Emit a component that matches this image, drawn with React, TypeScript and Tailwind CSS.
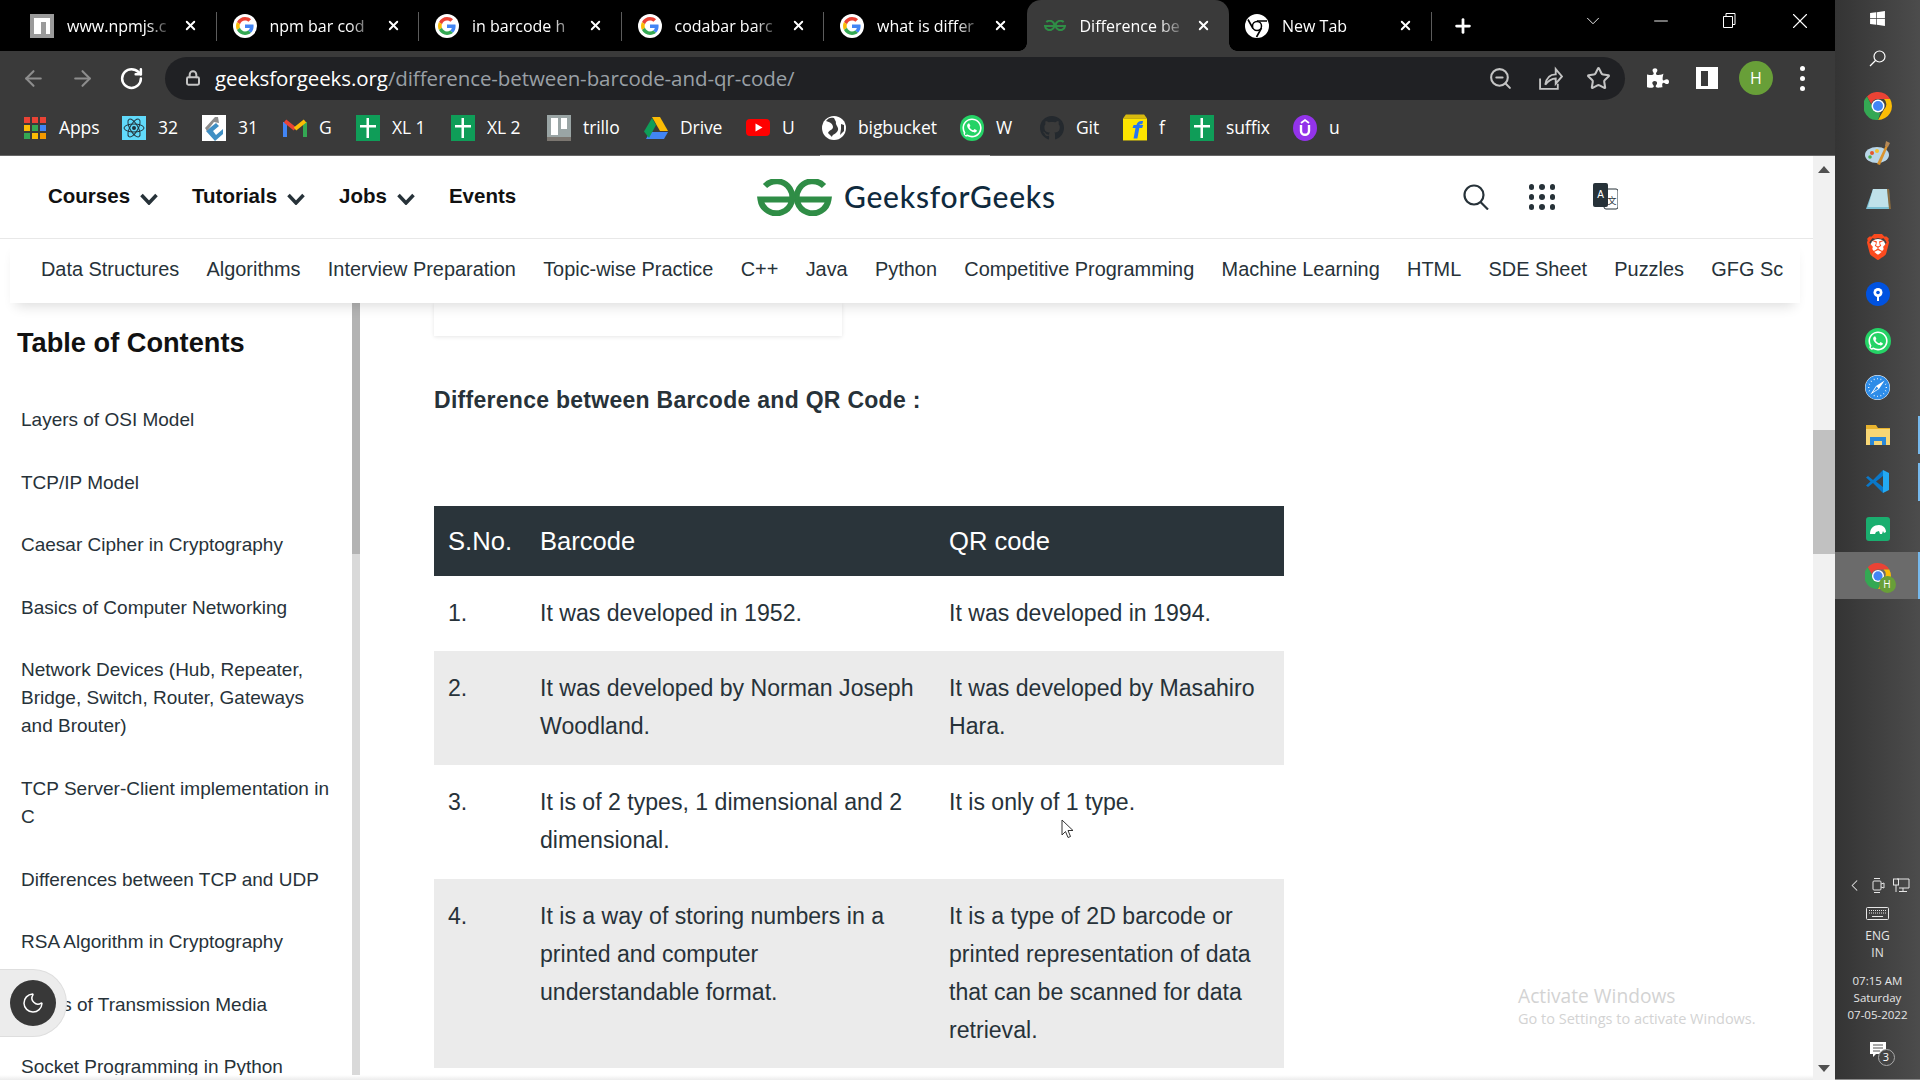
import { ArrowLeft, ArrowRight, RotateCw, Lock, ZoomOut, Star, X, Plus, Minus, ChevronDown, ChevronLeft, Moon } from "lucide-react";
import { FaWindows, FaWhatsapp, FaGithub, FaSafari, FaPuzzlePiece } from "react-icons/fa";
import { SiBrave } from "react-icons/si";

const uiFont = "font-['Open_Sans',sans-serif]";
const pageFont = "font-['Liberation_Sans',Arial,sans-serif]";

function GoogleG() {
  return (
    <div className="w-6 h-6 rounded-full bg-white flex items-center justify-center shrink-0">
      <svg width="18" height="18" viewBox="0 0 48 48">
        <path fill="#EA4335" d="M24 9.5c3.5 0 6.700 1.300 9.200 3.400l6.900-6.900C35.900 2.400 30.300 0 24 0 14.600 0 6.500 5.400 2.600 13.300l8 6.200C12.500 13.700 17.800 9.500 24 9.500z" />
        <path fill="#4285F4" d="M46.900 24.500c0-1.600-.1-3.100-.4-4.500H24v9h12.900c-.6 3-2.200 5.500-4.800 7.200l7.700 6c4.500-4.200 7.100-10.300 7.100-17.700z" />
        <path fill="#FBBC05" d="M10.500 28.700c-.5-1.500-.8-3-.8-4.700s.3-3.200.8-4.700l-8-6.200C.9 16.300 0 20 0 24s.9 7.700 2.600 10.900l7.900-6.200z" />
        <path fill="#34A853" d="M24 48c6.500 0 11.900-2.100 15.900-5.800l-7.700-6c-2.200 1.400-4.900 2.300-8.200 2.300-6.200 0-11.500-4.200-13.400-9.800l-8 6.200C6.500 42.600 14.600 48 24 48z" />
      </svg>
    </div>
  );
}

function GfgMark({ w, h, sw = 6 }: { w: number; h: number; sw?: number }) {
  return (
    <svg width={w} height={h} viewBox="0 0 75 37" fill="none" stroke="#2f8d46" strokeWidth={sw}>
      <path d="M67 7A16 16 0 1 0 71.500 20.500L37.500 20.500" />
      <path d="M8 7A16 16 0 1 1 3.500 20.500L37.500 20.500" />
    </svg>
  );
}

function NpmFav() {
  return (
    <svg width="24" height="24" viewBox="0 0 24 24" className="shrink-0">
      <rect width="24" height="24" fill="#9a9a9a" />
      <path fill="#fff" d="M4 4h16v16h-4V8h-5v12H4z" />
    </svg>
  );
}

function ChromeMono() {
  return (
    <svg width="24" height="24" viewBox="0 0 24 24" className="shrink-0">
      <circle cx="12" cy="12" r="12" fill="#fff" />
      <path d="M12 7h10M8 14.500 3 5.500M16.500 14 11.500 23" stroke="#000" strokeWidth="1.600" />
      <circle cx="12" cy="12" r="4.500" fill="#fff" stroke="#000" strokeWidth="1.500" />
    </svg>
  );
}

type Tab = { title: string; icon: React.ReactNode; active?: boolean };

const tabs: Tab[] = [
  { title: "www.npmjs.c", icon: <NpmFav /> },
  { title: "npm bar cod", icon: <GoogleG /> },
  { title: "in barcode h", icon: <GoogleG /> },
  { title: "codabar barc", icon: <GoogleG /> },
  { title: "what is differ", icon: <GoogleG /> },
  { title: "Difference be", icon: <div className="w-6 flex justify-center shrink-0"><GfgMark w={22} h={11} sw={7} /></div>, active: true },
  { title: "New Tab", icon: <ChromeMono /> },
];

function TabStrip() {
  return (
    <div className={`h-[51px] bg-black flex pl-[14px] shrink-0 text-white text-[16px] ${uiFont}`}>
      {tabs.map((t, i) => (
        <div
          key={i}
          className={`relative w-[202.5px] flex items-center pl-4 shrink-0 ${t.active ? "bg-[#3a3a3a] rounded-t-[14px]" : ""}`}
        >
          {t.active && (
            <>
              <div className="absolute -left-2 bottom-0 w-2 h-2 bg-[radial-gradient(circle_at_0_0,#000_7.5px,#3a3a3a_8px)]" />
              <div className="absolute -right-2 bottom-0 w-2 h-2 bg-[radial-gradient(circle_at_100%_0,#000_7.5px,#3a3a3a_8px)]" />
            </>
          )}
          {t.icon}
          <div className="ml-[13px] w-[110px] whitespace-nowrap [mask-image:linear-gradient(to_right,black_72%,transparent_97%)]">
            {t.title}
          </div>
          <X size={15} strokeWidth={3} className="ml-[6px] shrink-0" />
          {!t.active && i !== 4 && <div className="absolute right-0 top-[12px] h-[29px] w-px bg-[#5c5c5c]" />}
        </div>
      ))}
      <Plus size={22} strokeWidth={3} className="ml-5 mt-[15px] shrink-0" />
      <div className="ml-auto flex items-start text-white">
        <ChevronDown size={22} strokeWidth={1} className="mt-[10px] mr-[46px]" />
        <Minus size={22} strokeWidth={1} className="mt-[10px] mr-[48px]" />
        <svg width="18" height="18" viewBox="0 0 18 18" fill="none" stroke="#fff" className="mt-3 mr-[49px]">
          <path d="M3.500 4.500h9v11h-9zM6 4.500V1.500h9v11h-2.500" />
        </svg>
        <X size={26} strokeWidth={1} className="mt-[8px] mr-[22px]" />
      </div>
    </div>
  );
}

function Toolbar() {
  return (
    <div className="h-[54px] bg-[#3a3a3a] flex items-center shrink-0 relative">
      <ArrowLeft size={25} strokeWidth={2} className="ml-[21px] text-[#8d8d8d]" />
      <ArrowRight size={25} strokeWidth={2} className="ml-[24px] text-[#8d8d8d]" />
      <RotateCw size={25} strokeWidth={2.4} className="ml-[24px] text-white" />
      <div className="ml-[21px] w-[1460px] h-[43px] rounded-full bg-[#202124] flex items-center pl-5 pr-[14px]">
        <Lock size={16} strokeWidth={3} className="text-[#c4c4c4]" />
        <div className={`ml-[14px] text-[20.500px] whitespace-nowrap tracking-[-0.08px] ${uiFont}`}>
          <span className="text-white">geeksforgeeks.org</span>
          <span className="text-[#9aa0a6]">/difference-between-barcode-and-qr-code/</span>
        </div>
        <ZoomOut size={25} strokeWidth={2} className="ml-auto text-[#c4c4c4]" />
        <svg width="25" height="25" viewBox="0 0 24 24" fill="none" stroke="#c4c4c4" strokeWidth="1.800" className="ml-[25px]">
          <path d="M2 12v10h17v-5M7 18c1-7 5-10 10-10V3l6 7-6 7v-5c-4 0-7 2-10 6z" />
        </svg>
        <Star size={25} strokeWidth={2} className="ml-[23px] text-[#c4c4c4]" />
      </div>
      <FaPuzzlePiece size={22} className="ml-[22px] text-white" />
      <div className="ml-[27px] w-[22px] h-[22px] bg-white flex items-center pl-[5px] justify-start">
        <div className="w-[7px] h-[15px] bg-[#3a3a3a]" />
      </div>
      <div className={`ml-[21px] w-[34px] h-[34px] rounded-full bg-[#689f38] text-white text-[16px] flex items-center justify-center ${uiFont}`}>H</div>
      <div className="ml-[27px] flex flex-col gap-[5px]">
        <div className="w-[5px] h-[5px] rounded-full bg-white" />
        <div className="w-[5px] h-[5px] rounded-full bg-white" />
        <div className="w-[5px] h-[5px] rounded-full bg-white" />
      </div>
    </div>
  );
}

function AppsIcon() {
  const c = ["#ea4335", "#ea4335", "#ea4335", "#fbbc05", "#34a853", "#4285f4", "#34a853", "#fbbc05", "#f29900"];
  return (
    <div className="grid grid-cols-3 gap-[2px] w-[22px] h-[22px]">
      {c.map((x, i) => (
        <svg key={i} width="6" height="6" viewBox="0 0 6 6"><rect width="6" height="6" fill={x} /></svg>
      ))}
    </div>
  );
}

function SheetIcon() {
  return (
    <svg width="24" height="26" viewBox="0 0 24 26">
      <rect width="24" height="26" fill="#0f9d58" />
      <path d="M4 10h16v2.500H4zM10.500 3H13v20h-2.500z" fill="#fff" />
    </svg>
  );
}

const bookmarks: { label: string; w: string; icon: React.ReactNode }[] = [
  { label: "Apps", w: "w-[99px]", icon: <AppsIcon /> },
  {
    label: "32",
    w: "w-[80px]",
    icon: (
      <svg width="24" height="24" viewBox="0 0 24 24">
        <rect width="24" height="24" fill="#61dafb" />
        <g fill="none" stroke="#22323a" strokeWidth="1">
          <ellipse cx="12" cy="12" rx="10" ry="4" />
          <ellipse cx="12" cy="12" rx="10" ry="4" transform="rotate(60 12 12)" />
          <ellipse cx="12" cy="12" rx="10" ry="4" transform="rotate(120 12 12)" />
        </g>
        <circle cx="12" cy="12" r="2" fill="#22323a" />
      </svg>
    ),
  },
  {
    label: "31",
    w: "w-[81px]",
    icon: (
      <svg width="24" height="26" viewBox="0 0 24 26">
        <rect width="24" height="26" fill="#fff" />
        <path d="M4 16 14 8l3 3-6 5 3 4 7-6v5l-8 7z" fill="#3f8fc4" />
        <path d="M3 13 13 2h3l1 6-5-1-7 9z" fill="#8c8c8c" />
      </svg>
    ),
  },
  {
    label: "G",
    w: "w-[73px]",
    icon: (
      <svg width="24" height="22" viewBox="0 0 24 22" fill="none">
        <path d="M2 20V5" stroke="#4285f4" strokeWidth="4" />
        <path d="M22 20V5" stroke="#34a853" strokeWidth="4" />
        <path d="M2 4l10 8" stroke="#ea4335" strokeWidth="4" />
        <path d="M22 4l-10 8" stroke="#fbbc05" strokeWidth="4" />
      </svg>
    ),
  },
  { label: "XL 1", w: "w-[95px]", icon: <SheetIcon /> },
  { label: "XL 2", w: "w-[96px]", icon: <SheetIcon /> },
  {
    label: "trillo",
    w: "w-[97px]",
    icon: (
      <svg width="24" height="26" viewBox="0 0 24 26">
        <rect width="24" height="26" fill="#9aa5a5" />
        <rect x="4" y="3" width="7" height="17" fill="#fff" />
        <rect x="14" y="3" width="6" height="11" fill="#fff" />
        <rect y="22" width="24" height="4" fill="#7b7670" />
      </svg>
    ),
  },
  {
    label: "Drive",
    w: "w-[102px]",
    icon: (
      <svg width="24" height="22" viewBox="0 0 24 22">
        <path d="M8 0h8l8 14h-8z" fill="#fbbc05" />
        <path d="M6 15h18l-4 7H2z" fill="#4285f4" />
        <path d="M0 14.500 8 1l4 7-7 13z" fill="#0f9d58" />
      </svg>
    ),
  },
  {
    label: "U",
    w: "w-[76px]",
    icon: (
      <svg width="24" height="17" viewBox="0 0 24 17">
        <rect width="24" height="17" rx="4" fill="#f00" />
        <path d="M9.500 4.500v8l7-4z" fill="#fff" />
      </svg>
    ),
  },
  {
    label: "bigbucket",
    w: "w-[138px]",
    icon: (
      <svg width="24" height="24" viewBox="0 0 24 24">
        <circle cx="12" cy="12" r="12" fill="#fff" />
        <path d="M4 5c4 1 7 3 7 6s-4 3-5 6l4 4c0-3 5-3 6-7 1-3-3-5-2-8l-2-4C9 1 6 2 4 5zM19 8l3 1 0 6-4 4 1-6z" fill="#3a3a3a" />
      </svg>
    ),
  },
  { label: "W", w: "w-[80px]", icon: <FaWhatsapp size={26} className="text-white bg-[#25d366] rounded-full p-[2px]" /> },
  { label: "Git", w: "w-[83px]", icon: <FaGithub size={26} className="text-[#24292e]" /> },
  {
    label: "f",
    w: "w-[67px]",
    icon: (
      <svg width="25" height="27" viewBox="0 0 25 27">
        <path d="M0 4h25v23H0z" fill="#ffe500" />
        <path d="M3 0h19l3 4H0z" fill="#d8b90e" />
        <path d="M11 25l2-11h-3l1-3h3c1-4 4-5 7-4l-1 3c-2 0-3 0-3 1h4l-1 3h-3l-2 11z" fill="#2874f0" />
      </svg>
    ),
  },
  { label: "suffix", w: "w-[103px]", icon: <SheetIcon /> },
  {
    label: "u",
    w: "w-[60px]",
    icon: (
      <svg width="24" height="26" viewBox="0 0 24 26">
        <ellipse cx="12" cy="13" rx="12" ry="13" fill="#9333ea" />
        <path d="M8 10v6c0 5 8 5 8 0v-6" fill="none" stroke="#fff" strokeWidth="2.400" />
        <path d="M8 8l4-3 4 3" fill="none" stroke="#fff" strokeWidth="1.800" />
      </svg>
    ),
  },
];

function Bookmarks() {
  return (
    <div className={`h-[50px] pb-[5px] bg-[#3a3a3a] flex items-center pl-[23px] shrink-0 text-white text-[17.500px] ${uiFont}`}>
      {bookmarks.map((b) => (
        <div key={b.label + b.w} className={`${b.w} flex items-center shrink-0`}>
          <div className="w-6 flex justify-center shrink-0">{b.icon}</div>
          <span className="ml-3 whitespace-nowrap tracking-[-0.1px]">{b.label}</span>
        </div>
      ))}
    </div>
  );
}

const topNav = ["Courses", "Tutorials", "Jobs"];

function HeaderRow() {
  return (
    <div className="h-[83px] border-b border-[#e8e8e8] flex items-center relative shrink-0 pl-12">
      <div className="flex items-center w-[709px] -mt-[2px] text-[20.500px] font-bold text-[#111]">
        {topNav.map((n) => (
          <div key={n} className="flex items-center mr-[34px]">
            <span>{n}</span>
            <svg width="18" height="12" viewBox="0 0 18 12" fill="none" stroke="#273239" strokeWidth="3.500" className="ml-[10px] mt-[5px]">
              <path d="M1.500 2 9 10l7.500-8" />
            </svg>
          </div>
        ))}
        <span>Events</span>
      </div>
      <GfgMark w={75} h={37} />
      <span className="ml-[12px] -mt-[2px] text-[30px] font-medium text-[#0f2a3d] font-['Lato',sans-serif] tracking-[0.75px]">GeeksforGeeks</span>
      <svg width="26" height="26" viewBox="0 0 26 26" fill="none" stroke="#273239" strokeWidth="2.200" className="ml-auto mr-[40px]">
        <circle cx="11" cy="11" r="9.500" />
        <path d="M17.500 18 25 25.500" />
      </svg>
      <div className="grid grid-cols-3 gap-x-[5px] gap-y-[4px] mr-[38px]">
        {[0, 1, 2, 3, 4, 5, 6, 7, 8].map((i) => (
          <div key={i} className="w-[5.500px] h-[6px] rounded-full bg-[#273239]" />
        ))}
      </div>
      <svg width="25" height="30" viewBox="0 0 25 30" className="mr-[195px] mt-[2px]">
        <rect x="11" y="6" width="14" height="20" rx="2" fill="#fff" stroke="#273239" />
        <rect width="15" height="24" rx="2" fill="#273239" />
        <text x="7.500" y="15" fontSize="10" fill="#fff" textAnchor="middle" fontFamily="Liberation Sans">A</text>
        <text x="19" y="21" fontSize="9" fill="#273239" textAnchor="middle" fontFamily="Noto Sans CJK SC">文</text>
      </svg>
    </div>
  );
}

const subNav = ["Data Structures", "Algorithms", "Interview Preparation", "Topic-wise Practice", "C++", "Java", "Python", "Competitive Programming", "Machine Learning", "HTML", "SDE Sheet", "Puzzles", "GFG Sc"];

function SubNav() {
  return (
    <div className="relative z-10 ml-[10px] w-[1790px] h-[64px] bg-white shadow-[0_9px_12px_-6px_rgba(0,0,0,0.14)] pl-[31px] pb-[3px] flex items-center shrink-0">
      <div className="w-[1743px] flex gap-[27.350px] text-[19.900px] text-[#273239] whitespace-nowrap">
        {subNav.map((s) => (
          <span key={s}>{s}</span>
        ))}
      </div>
    </div>
  );
}

const toc = [
  "Layers of OSI Model",
  "TCP/IP Model",
  "Caesar Cipher in Cryptography",
  "Basics of Computer Networking",
  "Network Devices (Hub, Repeater, Bridge, Switch, Router, Gateways and Brouter)",
  "TCP Server-Client implementation in C",
  "Differences between TCP and UDP",
  "RSA Algorithm in Cryptography",
  "Types of Transmission Media",
  "Socket Programming in Python",
];

function Sidebar() {
  return (
    <div className="w-[360px] shrink-0 flex overflow-hidden">
      <div className="w-[352px] pt-[24px] pl-[17px] shrink-0">
        <h2 className="text-[27.200px] leading-8 font-bold text-[#111]">Table of Contents</h2>
        <ul className="mt-[47px] pl-[4px] pr-[18px] flex flex-col gap-[34.600px] text-[19px] leading-[28px] text-[#273239]">
          {toc.map((t) => (
            <li key={t}>{t}</li>
          ))}
        </ul>
      </div>
      <div className="w-2 bg-[#d9d9d9] shrink-0">
        <div className="h-[251px] bg-[#b3b3b3]" />
      </div>
    </div>
  );
}

const rows = [
  { n: "1.", a: "It was developed in 1952.", b: "It was developed in 1994.", pad: "pt-[18px] pb-[19px]" },
  { n: "2.", a: "It was developed by Norman Joseph Woodland.", b: "It was developed by Masahiro Hara.", pad: "pt-[18px] pb-[20px]" },
  { n: "3.", a: "It is of 2 types, 1 dimensional and 2 dimensional.", b: "It is only of 1 type.", pad: "pt-[18px] pb-[20px]" },
  { n: "4.", a: "It is a way of storing numbers in a printed and computer understandable format.", b: "It is a type of 2D barcode or printed representation of data that can be scanned for data retrieval.", pad: "pt-[18px] pb-[19px]" },
];

function Main() {
  return (
    <div className="flex-1 pl-[74px] min-w-0 overflow-hidden">
      <div className="w-[408px] h-[33px] bg-white shadow-[0_1px_4px_rgba(0,0,0,0.1)]" />
      <h3 className="mt-[50px] text-[23px] leading-7 font-bold text-[#273239] tracking-[0.28px]">Difference between Barcode and QR Code :</h3>
      <table className="mt-[92px] w-[850px] table-fixed text-[23.100px] leading-[38px] text-[#273239]">
        <thead>
          <tr className="bg-[#2a343a] text-white h-[70px] text-left text-[25.600px]">
            <th className="w-[91px] pl-[14px] font-normal">S.No.</th>
            <th className="w-[409px] pl-[15px] font-normal">Barcode</th>
            <th className="w-[350px] pl-[15px] font-normal">QR code</th>
          </tr>
        </thead>
        <tbody>
          {rows.map((r, i) => (
            <tr key={r.n} className={i % 2 ? "bg-[#ebebeb]" : "bg-white"}>
              <td className={`align-top pl-[14px] ${r.pad}`}>{r.n}</td>
              <td className={`align-top pl-[15px] pr-[17px] ${r.pad}`}>{r.a}</td>
              <td className={`align-top pl-[15px] pr-[5px] ${r.pad}`}>{r.b}</td>
            </tr>
          ))}
        </tbody>
      </table>
    </div>
  );
}

function ChromeColor({ size = 28 }: { size?: number }) {
  return (
    <svg width={size} height={size} viewBox="0 0 28 28">
      <path d="M14 0a14 14 0 0 1 12.100 7H14a7 7 0 0 0-6.700 4.900L3 4.500A14 14 0 0 1 14 0z" fill="#ea4335" />
      <path d="M26.100 7A14 14 0 0 1 14 28l6-10.500a7 7 0 0 0 0-10.500z" fill="#fbbc05" />
      <path d="M3 4.500 8 14a7 7 0 0 0 8.500 6.500L14 28A14 14 0 0 1 3 4.500z" fill="#34a853" />
      <circle cx="14" cy="14" r="6.500" fill="#fff" />
      <circle cx="14" cy="14" r="5" fill="#4285f4" />
    </svg>
  );
}

const dock: { key: string; icon: React.ReactNode; bar?: boolean; active?: boolean; h?: string }[] = [
  { key: "win", h: "h-[34px]", icon: <FaWindows size={17} className="text-white" /> },
  {
    key: "search",
    icon: (
      <svg width="17" height="17" viewBox="0 0 17 17" fill="none" stroke="#fff" strokeWidth="1.200">
        <circle cx="10.500" cy="6.500" r="5.500" />
        <path d="M6.500 10.500 1 16" />
      </svg>
    ),
  },
  { key: "chrome", icon: <ChromeColor /> },
  {
    key: "paint",
    icon: (
      <svg width="26" height="26" viewBox="0 0 26 26">
        <ellipse cx="12" cy="15" rx="12" ry="8" fill="#b9d6e8" />
        <circle cx="7" cy="13" r="2" fill="#e4572e" />
        <circle cx="12" cy="11" r="2" fill="#f2c230" />
        <circle cx="5" cy="17" r="1.800" fill="#4caf50" />
        <path d="M12 24 21 5l2 1-8 19z" fill="#d9932f" />
        <path d="M21 1l4 2-2 4-3-1z" fill="#b58855" />
      </svg>
    ),
  },
  {
    key: "notepad",
    icon: (
      <svg width="26" height="26" viewBox="0 0 26 26">
        <path d="M8 2h16l1 20H1z" fill="#7cc0d4" />
        <path d="M8 2h14l2 18H3z" fill="#bfe1ea" />
        <path d="M22 2h2l2 20h-2z" fill="#8a6b3f" />
      </svg>
    ),
  },
  {
    key: "brave",
    icon: (
      <div className="relative">
        <div className="absolute inset-[5px] rounded-full bg-white" />
        <SiBrave size={26} className="relative text-[#fb4a1e]" />
      </div>
    ),
  },
  {
    key: "sourcetree",
    icon: (
      <svg width="24" height="24" viewBox="0 0 24 24">
        <circle cx="12" cy="12" r="12" fill="#0052e0" />
        <circle cx="12" cy="10.500" r="4.500" fill="#fff" />
        <circle cx="12" cy="10.500" r="1.800" fill="#0052e0" />
        <rect x="11" y="14" width="2" height="5" fill="#fff" />
      </svg>
    ),
  },
  {
    key: "whatsapp",
    icon: <FaWhatsapp size={26} className="text-white bg-[#25d366] rounded-full p-[2px]" />,
  },
  { key: "safari", icon: <FaSafari size={25} className="text-[#2d8ce8] bg-white rounded-full" /> },
  {
    key: "folder",
    bar: true,
    icon: (
      <svg width="24" height="20" viewBox="0 0 24 20">
        <path d="M0 0h10l2 3H24v17H0z" fill="#e8b32e" />
        <path d="M0 4h24v16H0z" fill="#f8d775" />
        <path d="M4 12h16v8h-4v-4H8v4H4z" fill="#2b88d8" />
      </svg>
    ),
  },
  {
    key: "vscode",
    bar: true,
    icon: (
      <svg width="25" height="25" viewBox="0 0 25 25">
        <path d="M18 1l6 3v17l-6 3z" fill="#23a9f2" />
        <path d="M18 1 8 11 3 7 1 8.500 5.500 12.500 1 16.500 3 18l5-4 10 10v-6L11 12.500 18 7z" fill="#0a78c9" />
      </svg>
    ),
  },
  {
    key: "green",
    icon: (
      <svg width="24" height="24" viewBox="0 0 24 24">
        <rect width="24" height="24" rx="3" fill="#1aae6f" />
        <path d="M4 17c0-6 4-9 9-9 4 0 7 3 7 7l-2 1-1-2-1 3h-2l-1-3-3 1-1 2H6z" fill="#fff" />
      </svg>
    ),
  },
  { key: "active", bar: true, active: true, icon: (
    <div className="relative">
      <ChromeColor size={26} />
      <div className={`absolute -right-[5px] -bottom-[4px] w-[17px] h-[17px] rounded-full bg-[#689f38] text-white text-[10px] flex items-center justify-center ${uiFont}`}>H</div>
    </div>
  ) },
];

function Taskbar() {
  return (
    <div className={`w-[85px] h-full shrink-0 bg-linear-to-r from-[#343434] to-[#4c4c4c] flex flex-col text-[#e6e6e6] ${uiFont}`}>
      <div className="flex flex-col mt-[1px]">
        {dock.map((d) => (
          <div key={d.key} className={`${d.h ?? "h-[47px]"} relative flex items-center justify-center ${d.active ? "bg-[#6b6b6b]" : ""}`}>
            {d.icon}
            {d.bar && <div className={`absolute right-0 w-[2px] bg-[#76b9ed] ${d.active ? "h-full" : "h-[38px]"}`} />}
          </div>
        ))}
      </div>
      <div className="mt-auto pb-[14px] border-b border-[#8c8c8c] flex flex-col items-center">
        <div className="flex items-center gap-[8px] h-[20px] -translate-y-[2px]">
          <ChevronLeft size={19} strokeWidth={1.300} />
          <svg width="13" height="17" viewBox="0 0 13 17" fill="none" stroke="#e6e6e6">
            <rect x="1" y="4" width="8" height="9" rx="1" />
            <path d="M9 7l3-1v5l-3-1M2 1.500h6M2 15.500h6" />
          </svg>
          <svg width="17" height="15" viewBox="0 0 17 15" fill="none" stroke="#e6e6e6">
            <path d="M4 1h12v9H6M10 10v3M6 13.500h8" />
            <rect x="0.500" y="1" width="5" height="6" />
            <path d="M3 7v7" />
          </svg>
        </div>
        <svg width="23" height="13" viewBox="0 0 23 13" fill="none" stroke="#e6e6e6" className="mt-[10px]">
          <rect x="0.500" y="0.500" width="22" height="12" rx="1" />
          <path d="M3 3.500h17M3 6h17" strokeDasharray="1 1" />
          <path d="M6 9.500h11" />
        </svg>
        <div className="mt-[7px] text-[12px] leading-[17px] text-center">
          <div>ENG</div>
          <div>IN</div>
        </div>
        <div className="mt-[11px] text-[11.500px] leading-[17px] text-center whitespace-nowrap">
          <div>07:15 AM</div>
          <div>Saturday</div>
          <div>07-05-2022</div>
        </div>
        <div className="relative mt-[19px] h-[20px] w-[16px] mb-[3px]">
          <svg width="16" height="15" viewBox="0 0 16 15">
            <path d="M0 0h16v12H6l-3 3v-3H0z" fill="#fff" />
            <path d="M3 3h10M3 6h10M3 9h7" stroke="#555" />
          </svg>
          <div className="absolute left-[8px] top-[7px] w-[17px] h-[17px] rounded-full border border-[#aaa] bg-[#444] text-white text-[11px] flex items-center justify-center">3</div>
        </div>
      </div>
    </div>
  );
}

function PageScrollbar() {
  return (
    <div className="absolute right-0 top-0 bottom-0 w-[22px] bg-[#f1f1f1] flex flex-col items-center">
      <div className="mt-[10px] w-0 h-0 border-x-[6px] border-x-transparent border-b-[7px] border-b-[#505050]" />
      <div className="mt-[257px] w-full h-[124px] bg-[#c1c1c1]" />
      <div className="mt-auto mb-[8px] w-0 h-0 border-x-[6px] border-x-transparent border-t-[7px] border-t-[#505050]" />
    </div>
  );
}

export default function App() {
  return (
    <div className="w-[1920px] h-[1080px] flex overflow-hidden bg-white">
      <div className="w-[1835px] h-full flex flex-col shrink-0">
        <TabStrip />
        <Toolbar />
        <Bookmarks />
        <div className="h-px bg-[#666] shrink-0">
          <div className="ml-[820px] w-[170px] h-px bg-[#bbb]" />
        </div>
        <div className={`relative flex-1 min-h-0 flex flex-col bg-white ${pageFont}`}>
          <div className="mr-[22px]"><HeaderRow /></div>
          <SubNav />
          <div className="flex flex-1 min-h-0">
            <Sidebar />
            <Main />
          </div>
          <PageScrollbar />
          <div className="absolute left-0 right-[22px] bottom-0 h-[5px] bg-linear-to-b from-white to-[#ececec] z-20" />

          {/* dark mode toggle */}
          <div className="absolute left-0 top-[813px] w-[67px] h-[68px] rounded-r-[34px] bg-[#ececec] border border-l-0 border-[#dedede] flex items-center pl-[10px] z-20">
            <div className="w-[46px] h-[46px] rounded-full bg-[#383838] flex items-center justify-center">
              <Moon size={24} strokeWidth={1.500} className="text-white" />
            </div>
          </div>

          {/* activation watermark */}
          <div className={`absolute left-[1518px] top-[828px] text-[#d3d3d3] z-20 ${uiFont}`}>
            <div className="text-[19.200px] leading-6">Activate Windows</div>
            <div className="text-[14.500px] leading-5 mt-[1px] whitespace-nowrap">Go to Settings to activate Windows.</div>
          </div>

          {/* mouse pointer */}
          <svg width="13" height="20" viewBox="0 0 13 20" className="absolute left-[1061px] top-[663px] z-30">
            <path d="M1 1v15l3.500-3.500 2.500 6 2.500-1-2.500-6H12z" fill="#fff" stroke="#333" strokeWidth="1" />
          </svg>
        </div>
      </div>
      <Taskbar />
    </div>
  );
}
